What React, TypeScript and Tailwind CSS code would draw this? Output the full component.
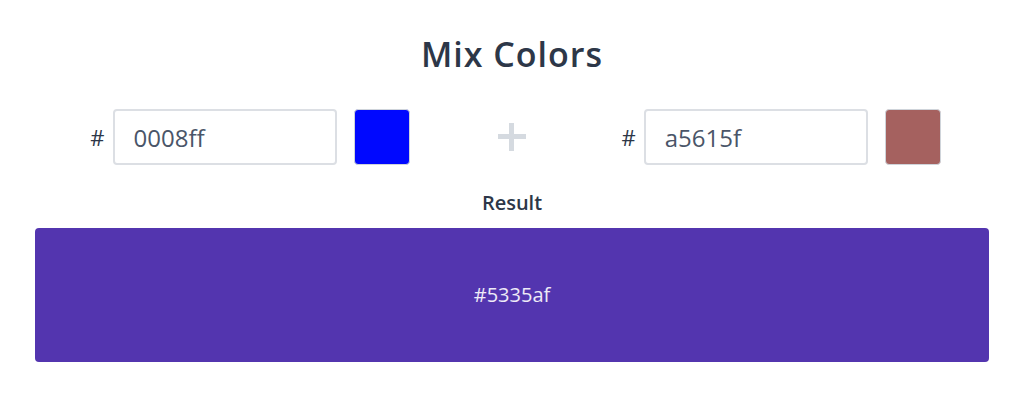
import React, { useState } from "react";

const ColorInput = ({
  value,
  onChange,
}: {
  value: string;
  onChange: (v: string) => void;
}) => (
  <div className="flex items-center">
    <span className="text-[22px] text-[#2d3748] mr-[8px]">#</span>
    <input
      value={value}
      onChange={(e) => onChange(e.target.value)}
      className="w-[224px] h-[56px] rounded-[4px] border-2 border-[#dcdfe4] bg-white px-[19px] text-[24px] text-[#4a5568] outline-none"
    />
    <div
      className="ml-[17px] w-[56px] h-[56px] rounded-[4px] border border-[#cfd4da]"
      style={{ backgroundColor: `#${value}` }}
    />
  </div>
);

export default function App() {
  const [first, setFirst] = useState("0008ff");
  const [second, setSecond] = useState("a5615f");
  const result = "5335af";

  return (
    <div className="w-[1024px] h-[405px] bg-white font-['Open_Sans','Noto_Sans',sans-serif] px-[35px] pt-[30px]">
      <h1 className="text-center text-[34px] font-semibold text-[#2d3748] leading-[48px] tracking-[1px]">
        Mix Colors
      </h1>

      <div className="mt-[31px] pl-[7px] flex items-center justify-center">
        <ColorInput value={first} onChange={setFirst} />
        <div className="ml-[88px] mr-[96px] relative w-[28px] h-[28px]">
          <div className="absolute left-[11px] top-0 w-[5px] h-[28px] bg-[#d5dae0]" />
          <div className="absolute left-0 top-[11px] w-[28px] h-[5px] bg-[#d5dae0]" />
        </div>
        <ColorInput value={second} onChange={setSecond} />
      </div>

      <div className="mt-[25px] text-center text-[20px] font-semibold text-[#2d3748] leading-[26px]">
        Result
      </div>

      <div
        className="mt-[12px] h-[134px] rounded-[4px] flex items-center justify-center"
        style={{ backgroundColor: `#${result}` }}
      >
        <span className="text-[20px] text-white/90">#{result}</span>
      </div>
    </div>
  );
}
